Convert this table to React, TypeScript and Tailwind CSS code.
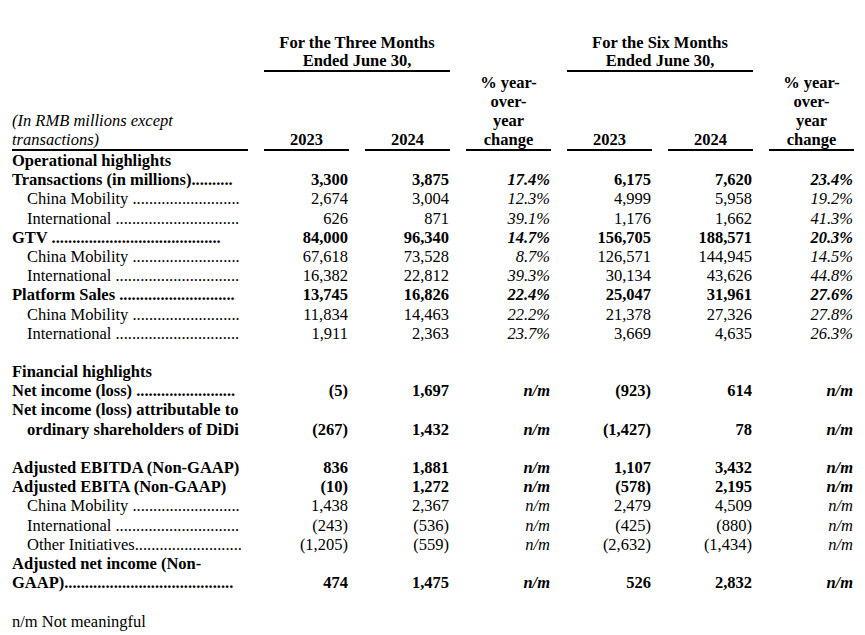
import React from "react";

type Row = {
  label?: string;
  bold?: boolean;
  indent?: boolean;
  dots?: number;
  sep?: string;
  vals?: string[];
  blank?: boolean;
};

const rows: Row[] = [
  { label: "Operational highlights", bold: true },
  { label: "Transactions (in millions)", bold: true, sep: "", dots: 10, vals: ["3,300", "3,875", "17.4%", "6,175", "7,620", "23.4%"] },
  { label: "China Mobility", indent: true, sep: " ", dots: 26, vals: ["2,674", "3,004", "12.3%", "4,999", "5,958", "19.2%"] },
  { label: "International", indent: true, sep: " ", dots: 30, vals: ["626", "871", "39.1%", "1,176", "1,662", "41.3%"] },
  { label: "GTV", bold: true, sep: " ", dots: 41, vals: ["84,000", "96,340", "14.7%", "156,705", "188,571", "20.3%"] },
  { label: "China Mobility", indent: true, sep: " ", dots: 26, vals: ["67,618", "73,528", "8.7%", "126,571", "144,945", "14.5%"] },
  { label: "International", indent: true, sep: " ", dots: 30, vals: ["16,382", "22,812", "39.3%", "30,134", "43,626", "44.8%"] },
  { label: "Platform Sales", bold: true, sep: " ", dots: 28, vals: ["13,745", "16,826", "22.4%", "25,047", "31,961", "27.6%"] },
  { label: "China Mobility", indent: true, sep: " ", dots: 26, vals: ["11,834", "14,463", "22.2%", "21,378", "27,326", "27.8%"] },
  { label: "International", indent: true, sep: " ", dots: 30, vals: ["1,911", "2,363", "23.7%", "3,669", "4,635", "26.3%"] },
  { blank: true },
  { label: "Financial highlights", bold: true },
  { label: "Net income (loss)", bold: true, sep: " ", dots: 24, vals: ["(5)", "1,697", "n/m", "(923)", "614", "n/m"] },
  { label: "Net income (loss) attributable to", bold: true },
  { label: "ordinary shareholders of DiDi", bold: true, indent: true, vals: ["(267)", "1,432", "n/m", "(1,427)", "78", "n/m"] },
  { blank: true },
  { label: "Adjusted EBITDA (Non-GAAP)", bold: true, vals: ["836", "1,881", "n/m", "1,107", "3,432", "n/m"] },
  { label: "Adjusted EBITA (Non-GAAP)", bold: true, vals: ["(10)", "1,272", "n/m", "(578)", "2,195", "n/m"] },
  { label: "China Mobility", indent: true, sep: " ", dots: 26, vals: ["1,438", "2,367", "n/m", "2,479", "4,509", "n/m"] },
  { label: "International", indent: true, sep: " ", dots: 30, vals: ["(243)", "(536)", "n/m", "(425)", "(880)", "n/m"] },
  { label: "Other Initiatives", indent: true, sep: "", dots: 26, vals: ["(1,205)", "(559)", "n/m", "(2,632)", "(1,434)", "n/m"] },
  { label: "Adjusted net income (Non-", bold: true },
  { label: "GAAP)", bold: true, sep: "", dots: 41, vals: ["474", "1,475", "n/m", "526", "2,832", "n/m"] },
  { blank: true },
];

function Label({ r }: { r: Row }) {
  const pad = r.indent ? "pl-[15px]" : "";
  const text = r.label + (r.dots ? (r.sep ?? "") + ".".repeat(r.dots) : "");
  return <div className={`${pad} whitespace-pre`}>{text}</div>;
}

export default function App() {
  return (
    <div
      className="min-h-[635px] w-[865px] bg-white text-black text-[16.5px]"
      style={{ fontFamily: '"Liberation Serif", "Times New Roman", serif' }}
    >
      {/* Header */}
      <div className="grid grid-cols-[236px_repeat(6,85px)] gap-x-4 pl-3 pt-[34px]">
        <div className="col-span-2 col-start-2 row-start-1 border-b-2 border-black text-center font-bold leading-[18px]">
          For the Three Months
          <br />
          Ended June 30,
        </div>
        <div className="col-span-2 col-start-5 row-start-1 border-b-2 border-black text-center font-bold leading-[18px]">
          For the Six Months
          <br />
          Ended June 30,
        </div>
        <div className="col-start-1 row-start-2 self-end border-b-2 border-black italic leading-[19px]">
          (In RMB millions except
          <br />
          transactions)
        </div>
        <div className="col-start-2 row-start-2 self-end border-b-2 border-black text-center font-bold leading-[19px]">2023</div>
        <div className="col-start-3 row-start-2 self-end border-b-2 border-black text-center font-bold leading-[19px]">2024</div>
        <div className="col-start-4 row-start-2 border-b-2 border-black pt-px text-center font-bold leading-[19px]">
          % year-
          <br />
          over-
          <br />
          year
          <br />
          change
        </div>
        <div className="col-start-5 row-start-2 self-end border-b-2 border-black text-center font-bold leading-[19px]">2023</div>
        <div className="col-start-6 row-start-2 self-end border-b-2 border-black text-center font-bold leading-[19px]">2024</div>
        <div className="col-start-7 row-start-2 border-b-2 border-black pt-px text-center font-bold leading-[19px]">
          % year-
          <br />
          over-
          <br />
          year
          <br />
          change
        </div>
      </div>

      {/* Body */}
      <div className="pl-3">
        {rows.map((r, i) =>
          r.blank ? (
            <div key={i} className="h-[19.2px]" />
          ) : (
            <div
              key={i}
              className={`grid h-[19.2px] grid-cols-[236px_repeat(6,85px)] gap-x-4 leading-[19.2px] ${r.bold ? "font-bold" : ""}`}
            >
              <Label r={r} />
              {r.vals?.map((v, j) => (
                <div
                  key={j}
                  className={`whitespace-nowrap pr-px text-right ${j === 2 || j === 5 ? "italic" : ""}`}
                >
                  {v}
                </div>
              ))}
            </div>
          )
        )}
        <div className="h-[19.2px] leading-[19.2px]">n/m Not meaningful</div>
      </div>
    </div>
  );
}
